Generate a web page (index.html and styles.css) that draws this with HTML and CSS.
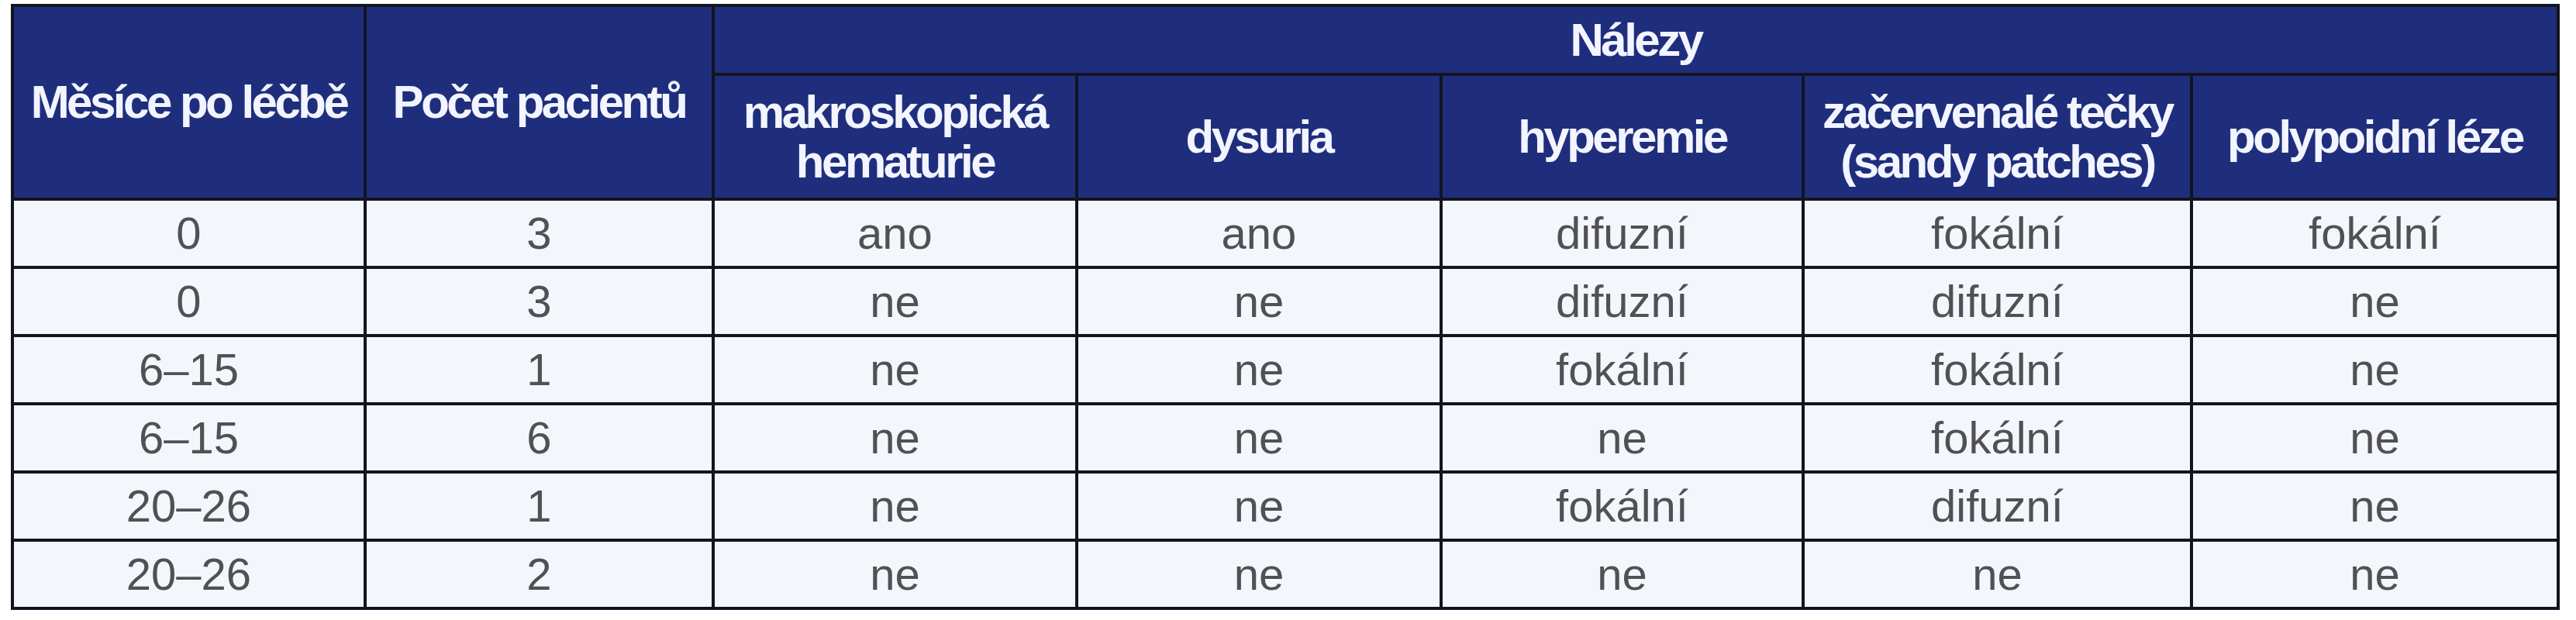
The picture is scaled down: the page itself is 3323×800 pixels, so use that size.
FILE: index.html
```html
<!DOCTYPE html>
<html lang="cs">
<head>
<meta charset="utf-8">
<title>Nálezy po léčbě</title>
<link rel="stylesheet" href="styles.css">
</head>
<body>
<table class="findings">
  <colgroup>
    <col class="c-months">
    <col class="c-count">
    <col class="c-macro">
    <col class="c-dys">
    <col class="c-hyper">
    <col class="c-sandy">
    <col class="c-poly">
  </colgroup>
  <thead>
    <tr class="head-top">
      <th rowspan="2">Měsíce po léčbě</th>
      <th rowspan="2">Počet pacientů</th>
      <th colspan="5">Nálezy</th>
    </tr>
    <tr class="head-sub">
      <th>makroskopická<br>hematurie</th>
      <th>dysuria</th>
      <th>hyperemie</th>
      <th>začervenalé tečky<br>(sandy patches)</th>
      <th>polypoidní léze</th>
    </tr>
  </thead>
  <tbody>
    <tr><td>0</td><td>3</td><td>ano</td><td>ano</td><td>difuzní</td><td>fokální</td><td>fokální</td></tr>
    <tr><td>0</td><td>3</td><td>ne</td><td>ne</td><td>difuzní</td><td>difuzní</td><td>ne</td></tr>
    <tr><td>6–15</td><td>1</td><td>ne</td><td>ne</td><td>fokální</td><td>fokální</td><td>ne</td></tr>
    <tr><td>6–15</td><td>6</td><td>ne</td><td>ne</td><td>ne</td><td>fokální</td><td>ne</td></tr>
    <tr><td>20–26</td><td>1</td><td>ne</td><td>ne</td><td>fokální</td><td>difuzní</td><td>ne</td></tr>
    <tr><td>20–26</td><td>2</td><td>ne</td><td>ne</td><td>ne</td><td>ne</td><td>ne</td></tr>
  </tbody>
</table>
</body>
</html>
```
FILE: styles.css
```css
html, body {
  margin: 0;
  padding: 0;
  background: #ffffff;
}

body {
  padding: 5px 0 0 14px;
}

.findings {
  border-collapse: collapse;
  table-layout: fixed;
  width: 3288px;
  border: 4px solid #121420;
  font-family: "Liberation Sans", Arial, sans-serif;
}

.c-months { width: 455px; }
.c-count { width: 449px; }
.c-macro { width: 469px; }
.c-dys { width: 470px; }
.c-hyper { width: 467px; }
.c-sandy { width: 501px; }
.c-poly { width: 473px; }

.findings th,
.findings td {
  border: 4px solid #121420;
  padding: 0;
  text-align: center;
  vertical-align: middle;
  white-space: nowrap;
}

.findings th {
  background: #1f2e7c;
  color: #f2f4ff;
  font-weight: bold;
  font-size: 60px;
  line-height: 64px;
  letter-spacing: -3.5px;
}

.head-top { height: 89px; }
.head-sub { height: 161px; }

.findings td {
  background: #f3f6fb;
  color: #505055;
  font-size: 58px;
  line-height: 66px;
}

.findings tbody tr { height: 88px; }
```
